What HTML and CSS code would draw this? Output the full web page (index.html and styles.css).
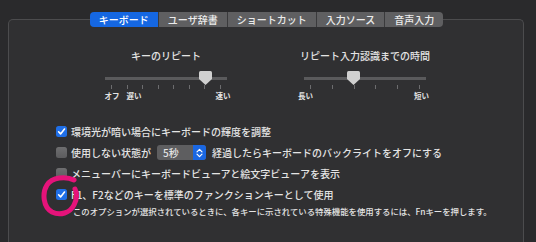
FILE: index.html
```html
<!DOCTYPE html>
<html lang="ja">
<head>
  <meta charset="UTF-8" />
  <title>キーボード</title>
  <link rel="stylesheet" href="styles.css">
</head>
<body>
  <div class="pane">
    <div class="tabs">
      <div class="tab active">キーボード</div>
      <div class="tab">ユーザ辞書</div>
      <div class="tab">ショートカット</div>
      <div class="tab">入力ソース</div>
      <div class="tab">音声入力</div>
    </div>

    <div class="box">
      <div class="sliders">
        <div class="slider-group">
          <div class="slider-title">キーのリピート</div>
          <div class="track">
            <svg class="thumb" style="left: 93.5px" width="13" height="14" viewBox="0 0 13 14"><path d="M1.5 0H11.5Q13 0 13 1.5V8L6.5 14L0 8V1.5Q0 0 1.5 0Z" fill="#d0d0d0"/></svg>
          </div>
          <div class="ticks">
            <span></span><span></span><span></span><span></span><span></span><span></span><span></span><span></span>
          </div>
          <div class="slider-labels">
            <div class="label-pair"><span>オフ</span><span>遅い</span></div>
            <span>速い</span>
          </div>
        </div>

        <div class="slider-group">
          <div class="slider-title">リピート入力認識までの時間</div>
          <div class="track">
            <svg class="thumb" style="left: 42.5px" width="13" height="14" viewBox="0 0 13 14"><path d="M1.5 0H11.5Q13 0 13 1.5V8L6.5 14L0 8V1.5Q0 0 1.5 0Z" fill="#d0d0d0"/></svg>
          </div>
          <div class="ticks">
            <span></span><span></span><span></span><span></span><span></span><span></span>
          </div>
          <div class="slider-labels wide">
            <span>長い</span>
            <span>短い</span>
          </div>
        </div>
      </div>

      <div class="options">
        <div class="option">
          <span class="checkbox checked"><svg width="11" height="11" viewBox="0 0 11 11"><path d="M2.6 5.8L4.6 7.9L8.5 3" fill="none" stroke="#fff" stroke-width="1.6" stroke-linecap="round" stroke-linejoin="round"/></svg></span>
          <span>環境光が暗い場合にキーボードの輝度を調整</span>
        </div>
        <div class="option">
          <span class="checkbox"></span>
          <span>使用しない状態が</span>
          <div class="popup">
            <span class="popup-value">5秒</span>
            <span class="popup-arrows"><svg width="7" height="10" viewBox="0 0 7 10"><path d="M1 3.8L3.5 1.3L6 3.8M1 6.2L3.5 8.7L6 6.2" fill="none" stroke="#fff" stroke-width="1.2" stroke-linecap="round" stroke-linejoin="round"/></svg></span>
          </div>
          <span>経過したらキーボードのバックライトをオフにする</span>
        </div>
        <div class="option">
          <span class="checkbox"></span>
          <span>メニューバーにキーボードビューアと絵文字ビューアを表示</span>
        </div>
        <div class="option">
          <span class="checkbox checked"><svg width="11" height="11" viewBox="0 0 11 11"><path d="M2.6 5.8L4.6 7.9L8.5 3" fill="none" stroke="#fff" stroke-width="1.6" stroke-linecap="round" stroke-linejoin="round"/></svg></span>
          <span>F1、F2などのキーを標準のファンクションキーとして使用</span>
        </div>
        <div class="option-note">このオプションが選択されているときに、各キーに示されている特殊機能を使用するには、Fnキーを押します。</div>
      </div>
    </div>

    <svg class="mark" width="44" height="44" viewBox="0 0 44 44">
      <path d="M34 5C26 1 12 2 7 10C2 18 3 32 12 37C20 41 30 38 34 30C37 24 37 18 35 14" fill="none" stroke="#e5137a" stroke-width="5" stroke-linecap="round"/>
    </svg>
  </div>
</body>
</html>
```

FILE: styles.css
```css
html, body {
  width: 100%;
  height: 100%;
  margin: 0;
  padding: 0;
  background-color: #2a2a2c;
  color: #e4e4e4;
  font-family: "Noto Sans CJK JP", "Noto Sans", sans-serif;
  font-size: 10px;
  font-weight: 500;
  overflow: hidden;
}

.pane {
  position: relative;
  height: 242px;
  padding-top: 12px;
  box-sizing: border-box;
  overflow: hidden;
}

.tabs {
  display: flex;
  justify-content: center;
  position: relative;
  z-index: 1;
  height: 15px;
  margin-right: 3px;
}

.tab {
  padding: 0 9px;
  line-height: 15px;
  background-color: #5f5f61;
  color: #ececec;
  border-left: 1px solid #3a3a3c;
}

.tab:first-child {
  border-left: none;
  border-radius: 4px 0 0 4px;
}

.tab:last-child {
  border-radius: 0 4px 4px 0;
}

.tab.active {
  background-color: #1567e2;
  color: white;
}

.box {
  margin: -8px 12px 0 8px;
  height: 192px;
  padding-top: 30px;
  border: 1px solid #4c4c4e;
  border-bottom: none;
  border-radius: 5px 5px 0 0;
  background-color: #303032;
}

.sliders {
  display: flex;
  gap: 59px;
  padding-left: 87px;
}

.slider-group {
  width: 140px;
  display: flex;
  flex-direction: column;
  align-items: center;
}

.slider-title {
  line-height: 12px;
  margin-bottom: 9px;
}

.track {
  position: relative;
  width: 122px;
  height: 14px;
  background: linear-gradient(#5a5a5c, #5a5a5c) center / 100% 3px no-repeat;
}

.thumb {
  position: absolute;
  top: 0;
}

.ticks {
  width: 110px;
  height: 4px;
  display: flex;
  justify-content: space-between;
}

.ticks span {
  width: 1px;
  background-color: #6c6c6e;
}

.slider-labels {
  width: 126px;
  margin-top: 2px;
  margin-left: 3px;
  display: flex;
  justify-content: space-between;
  font-size: 7.5px;
  line-height: 10px;
  font-weight: bold;
}

.slider-labels.wide {
  width: 131px;
  margin-left: -3px;
}

.label-pair {
  display: flex;
  gap: 7px;
}

.options {
  margin-top: 20px;
  padding-left: 47px;
}

.option {
  display: flex;
  align-items: center;
  height: 21px;
}

.checkbox {
  width: 11px;
  height: 11px;
  margin-right: 4px;
  border-radius: 2.5px;
  background: linear-gradient(#6e6e70, #5c5c5e);
  display: flex;
}

.checkbox.checked {
  background: #1f6fe8;
}

.popup {
  display: flex;
  width: 49px;
  height: 15px;
  margin: 0 6px;
  border-radius: 3px;
  background-color: #5e5e60;
}

.popup-value {
  flex: 1;
  padding-left: 6px;
  line-height: 15px;
}

.popup-arrows {
  width: 13px;
  display: flex;
  align-items: center;
  justify-content: center;
  background-color: #1a67e2;
  border-radius: 0 3px 3px 0;
}

.option-note {
  padding-left: 17px;
  font-size: 8.4px;
  line-height: 12px;
}

.mark {
  position: absolute;
  left: 40px;
  top: 175px;
}
```
